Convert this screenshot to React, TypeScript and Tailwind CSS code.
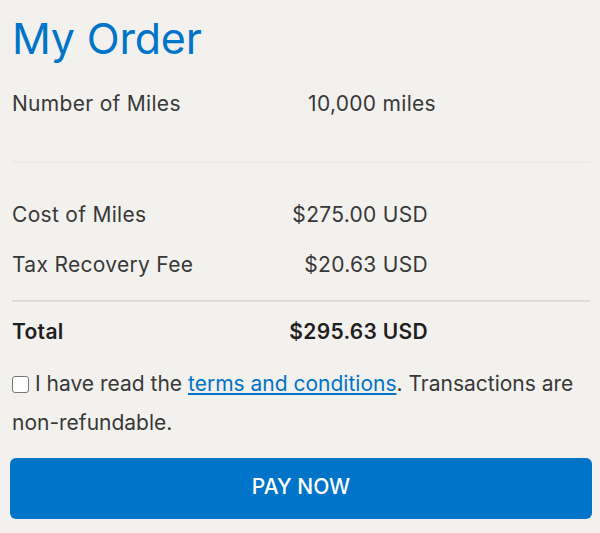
import React from "react";

export default function App() {
  return (
    <div className="w-[600px] h-[533px] bg-[#f3f1ee] px-3 pt-[8px] text-[21px] tracking-[0.3px] overflow-hidden" style={{ fontFamily: "Inter, 'Open Sans', sans-serif" }}>
      <h1 className="text-[43px] leading-[60px] text-[#0074c8] font-normal tracking-[-0.2px]">My Order</h1>
      <div className="flex items-center h-[50px] mt-[11px] text-[#383838]">
        <div className="w-[281px] flex-none">Number of Miles</div>
        <div className="w-[143px] text-right">10,000 miles</div>
      </div>
      <div className="h-[2px] bg-[#ecebe8] mt-[32px] mr-[-2px]" />
      <div className="mt-[27px]">
        <div className="flex items-center h-[50px] text-[#383838]">
          <div className="w-[266px] flex-none">Cost of Miles</div>
          <div className="w-[150px] text-right">$275.00 USD</div>
        </div>
        <div className="flex items-center h-[50px] text-[#383838]">
          <div className="w-[266px] flex-none">Tax Recovery Fee</div>
          <div className="w-[150px] text-right">$20.63 USD</div>
        </div>
      </div>
      <div className="h-[2px] bg-[#dedcd9] mt-[10px] mr-[-2px]" />
      <div className="flex items-center h-[60px] font-semibold text-[#1f1f1f]">
        <div className="w-[266px] flex-none">Total</div>
        <div className="w-[150px] text-right">$295.63 USD</div>
      </div>
      <p className="leading-[39px] text-[#383838] mt-[2px] tracking-[0px]">
        <span className="inline-block w-[17px] h-[17px] border border-[#777] rounded-[3px] bg-white align-[-2px] mr-[6px]" />
        I have read the <a className="text-[#0074c8] underline underline-offset-2">terms and conditions</a>. Transactions are <span className="whitespace-nowrap">non-refundable.</span>
      </p>
      <button className="mt-[16px] ml-[-2px] w-[582px] h-[61px] pb-[4px] rounded-[6px] bg-[#0074c8] text-white text-[21px] font-medium tracking-normal">PAY NOW</button>
    </div>
  );
}
